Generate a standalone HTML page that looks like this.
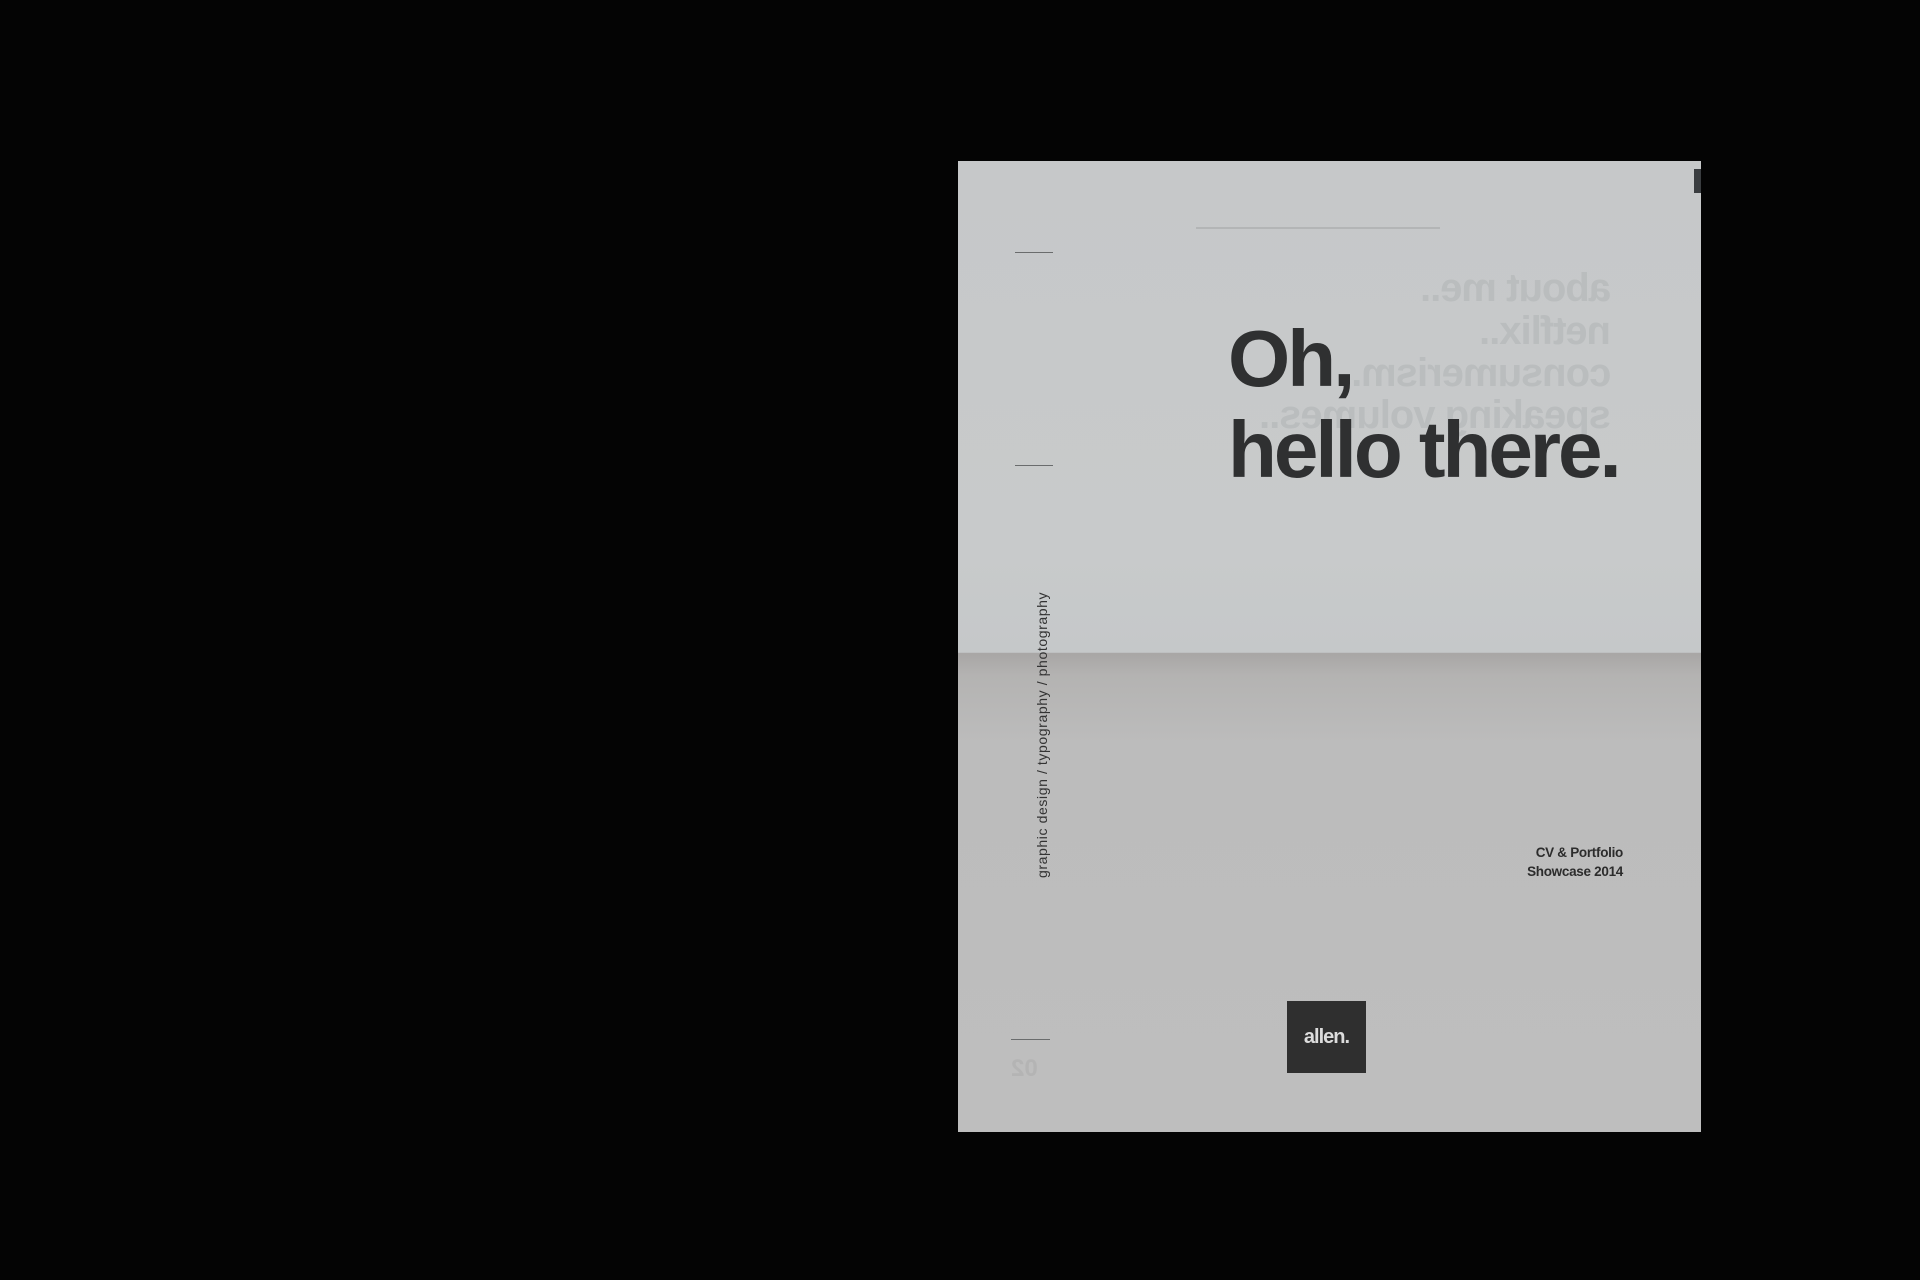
<!DOCTYPE html>
<html><head><meta charset="utf-8"><style>
html,body{margin:0;padding:0;width:1920px;height:1280px;background:#040404;overflow:hidden;font-family:"Liberation Sans",sans-serif}
.paper{position:absolute;left:958px;top:161px;width:743px;height:971px;background:linear-gradient(180deg,#c6c8c9 0%,#c8cacb 40%,#c5c8c9 50.6%,#a8a6a5 50.7%,#b4b3b2 53%,#bcbcbc 60%,#bebebe 100%)}
.a{position:absolute}
.tick{position:absolute;height:1px;background:#6a6c6d}
.ghost{position:absolute;right:90px;transform:scaleX(-1);font-weight:bold;font-size:40px;color:#babdbe;white-space:nowrap;letter-spacing:-1px}
</style></head><body>
<div class="paper">
  <div class="a" style="left:736px;top:8px;width:7px;height:24px;background:#3a3d40"></div>
  <div class="a" style="left:238px;top:66px;width:244px;height:2px;background:#b3b5b6"></div>
  <div class="tick" style="left:57px;top:91px;width:38px"></div>
  <div class="tick" style="left:57px;top:304px;width:38px"></div>
  <div class="tick" style="left:53px;top:878px;width:39px"></div>
  <div class="ghost" style="top:105px">about me..</div>
  <div class="ghost" style="top:148px">netflix..</div>
  <div class="ghost" style="top:190px">consumerism..</div>
  <div class="ghost" style="top:232px">speaking volumes..</div>
  <div class="a" style="left:270px;top:152px;font-weight:bold;font-size:80px;line-height:91px;letter-spacing:-3px;color:#2f3031">Oh,<br>hello there.</div>
  <div class="a" style="left:76px;top:717px;transform-origin:0 0;transform:rotate(-90deg);font-size:14px;letter-spacing:0.6px;color:#333;white-space:nowrap">graphic design / typography / photography</div>
  <div class="a" style="right:78px;top:682px;text-align:right;font-size:13.5px;font-weight:bold;line-height:19px;color:#2c2c2c;letter-spacing:-0.3px">CV &amp; Portfolio<br>Showcase 2014</div>
  <div class="a" style="left:329px;top:840px;width:79px;height:72px;background:#2f2f2f;color:#dcdcdc;font-size:20px;font-weight:bold;letter-spacing:-1px;text-align:center;line-height:72px">allen.</div>
  <div class="a" style="left:53px;top:894px;font-size:24px;font-weight:bold;color:#b4b4b4;transform:scaleX(-1)">02</div>
</div>
</body></html>
